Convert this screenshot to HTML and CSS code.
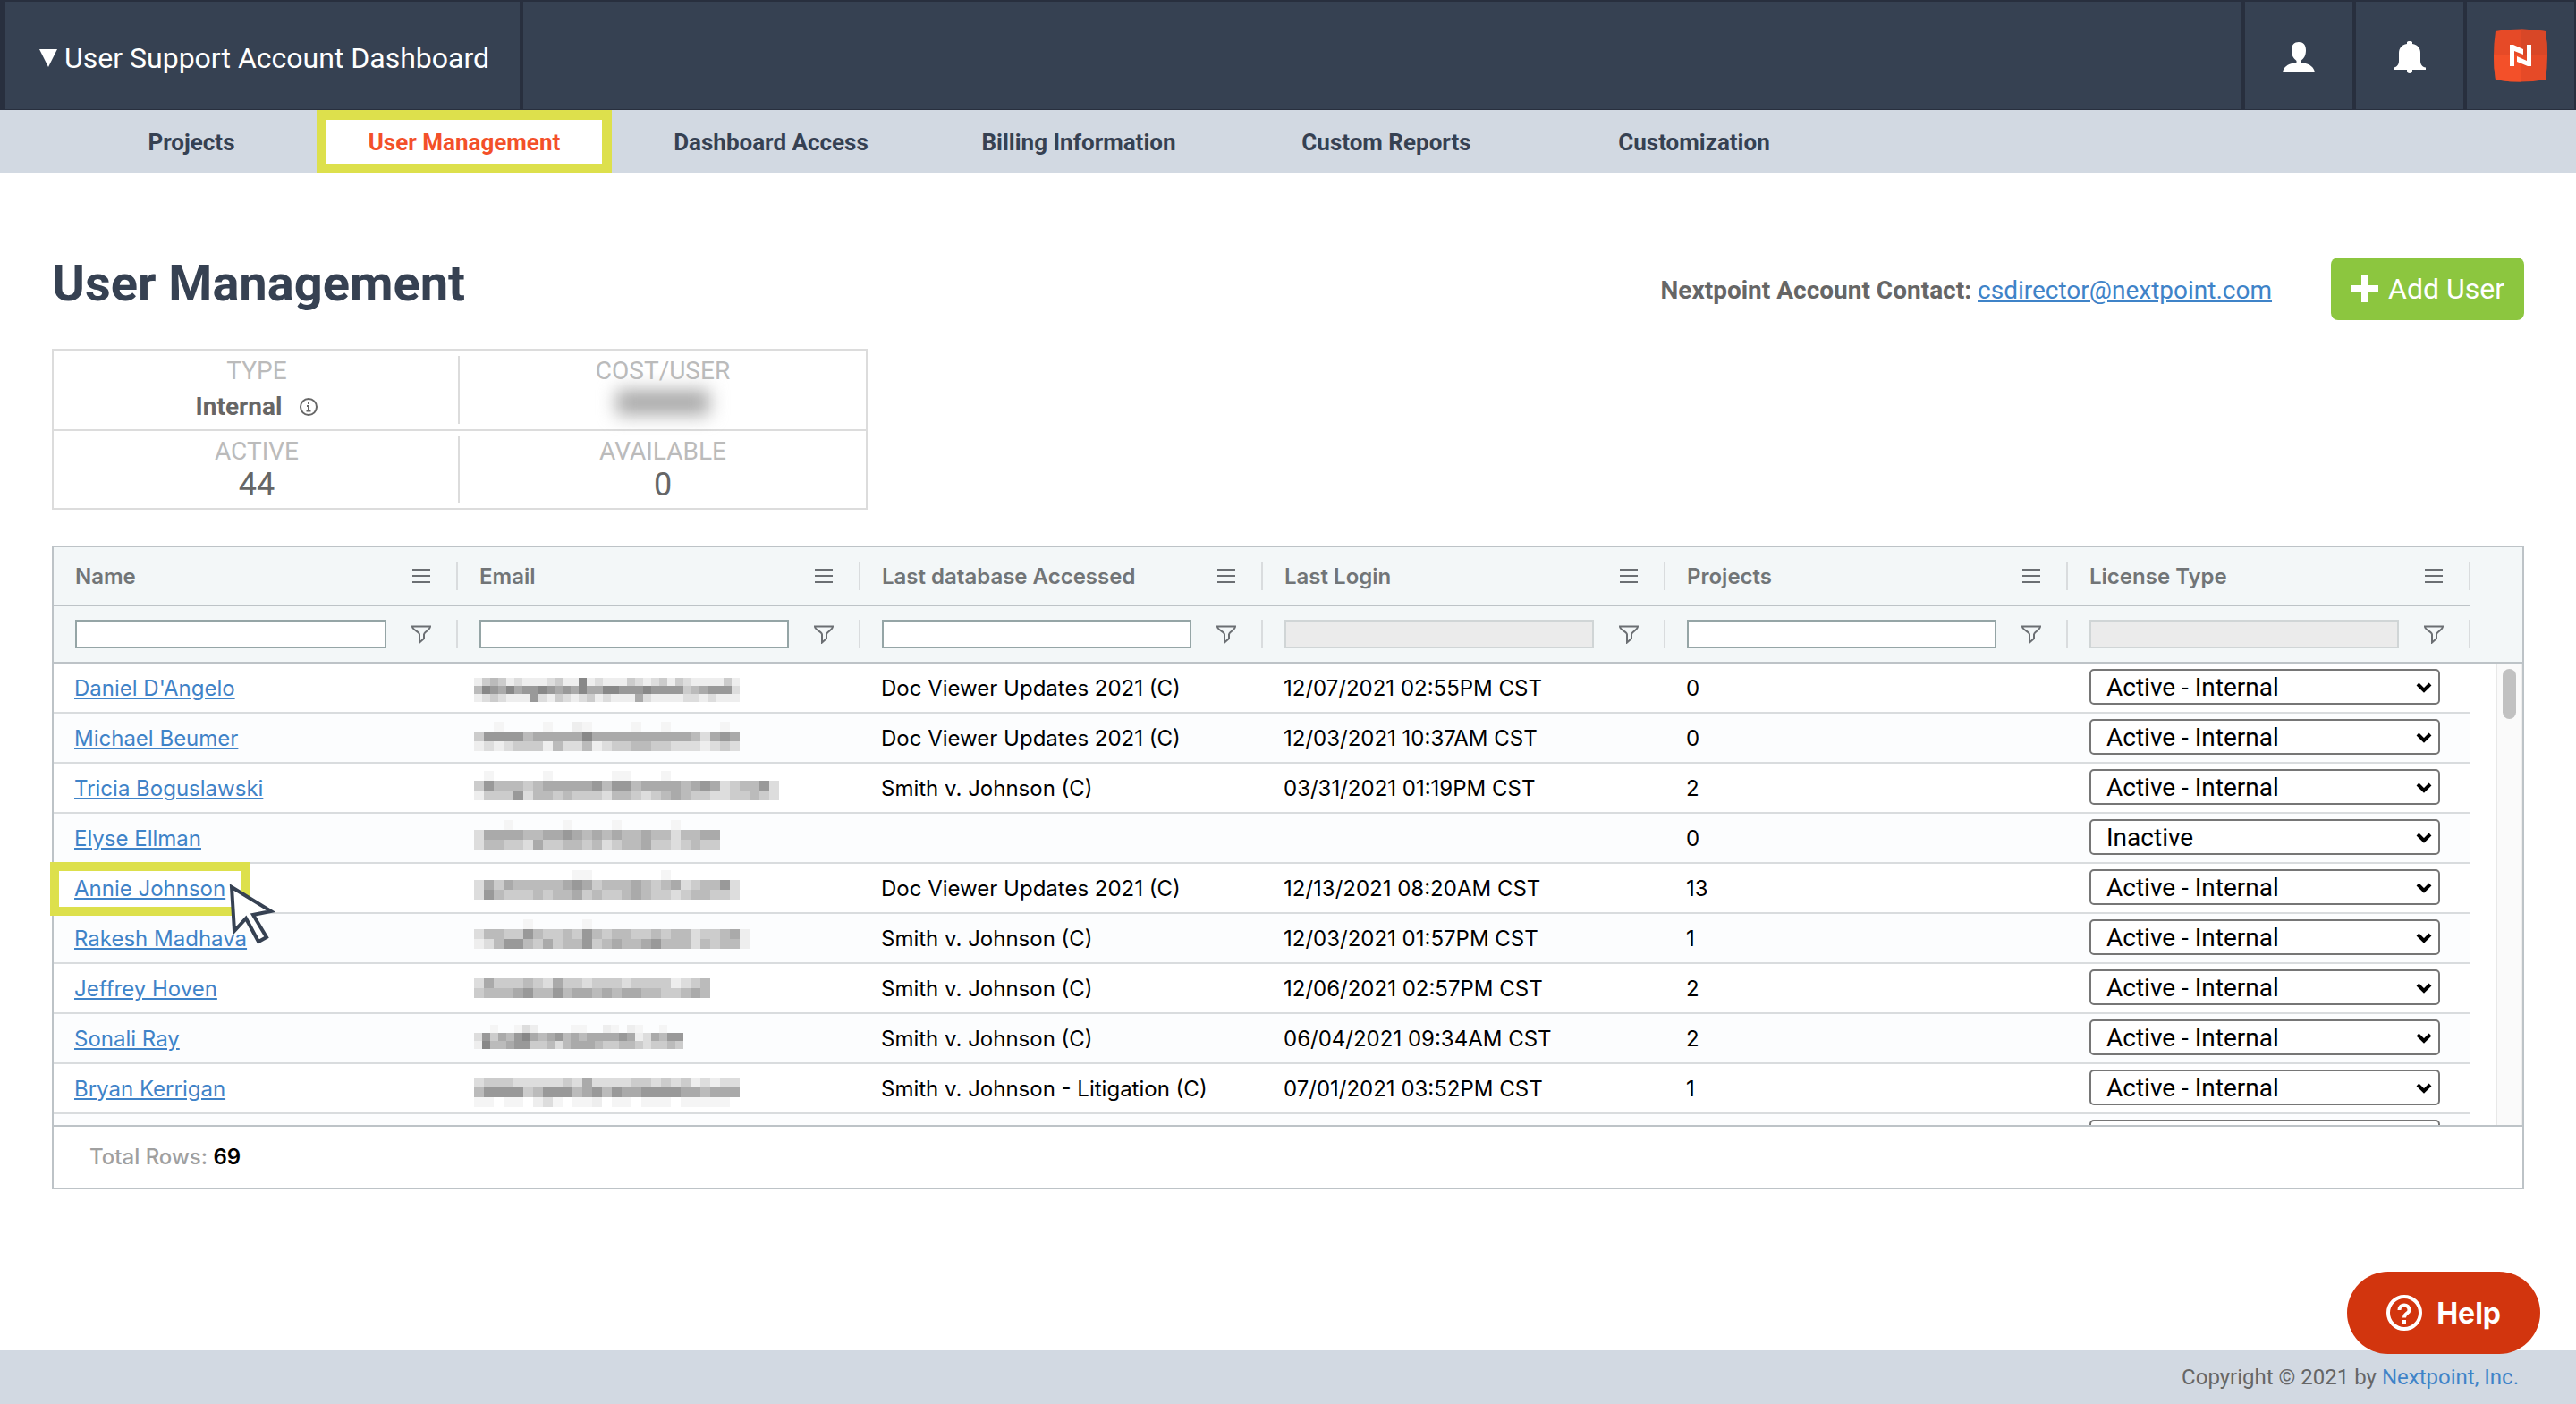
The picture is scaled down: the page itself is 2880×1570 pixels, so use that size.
FILE: index.html
```html
<!DOCTYPE html>
<html lang="en">
<head>
<meta charset="UTF-8" />
<meta name="viewport" content="width=device-width, initial-scale=1" />
<title>User Management</title>
<link rel="stylesheet" href="styles.css">
</head>
<body>

<!-- shared icons -->
<svg class="sprite" width="0" height="0" aria-hidden="true">
  <symbol id="icon-menu" viewBox="0 0 22 22">
    <path d="M1 4h20M1 11h20M1 18h20" fill="none" stroke="#6b6f73" stroke-width="2"/>
  </symbol>
  <symbol id="icon-filter" viewBox="0 0 22 22">
    <path d="M1 2.500h20c0 4-7 6-7 9v4.500l-5 4.500v-9C9 8.500 1 6.500 1 2.500z" fill="none" stroke="#6b6f73" stroke-width="2"/>
  </symbol>
  <symbol id="icon-arrow" viewBox="0 0 18 12">
    <path d="M2 2l7 7 7-7" fill="none" stroke="#000" stroke-width="4"/>
  </symbol>
</svg>

<header class="topbar">
  <a href="#" class="account-switch"><span class="caret"></span>User Support Account Dashboard</a>
  <div class="topbar-icons">
    <a href="#" class="topbar-icon" aria-label="Profile">
      <svg width="36" height="34" viewBox="0 0 36 34" fill="#fff">
        <path d="M18 0c5 0 8 3 8 9 0 6-2 9-5.500 12v2C28 24 34 26 36 33.500H0C2 26 8 24 15.500 23v-2C12 18 10 15 10 9c0-6 3-9 8-9z"/>
      </svg>
    </a>
    <a href="#" class="topbar-icon" aria-label="Notifications">
      <svg width="36" height="36" viewBox="0 0 36 36" fill="#fff">
        <path d="M15 3V1.500C15 .5 16 0 18 0s3 .5 3 1.500V3c6 1 9 5 9 10v9c0 4 2 7 6 7.500V32H21v1c0 2-1 3-3 3s-3-1-3-3v-1H0v-2.500C4 29 6 26 6 22v-9C6 8 9 4 15 3z"/>
      </svg>
    </a>
    <a href="#" class="topbar-icon brand" aria-label="Nextpoint">
      <svg width="60" height="60" viewBox="0 0 60 60">
        <path d="M2 3Q30-2 58 3Q62 30 58 57Q30 62 2 57Q-2 30 2 3z" fill="#e64a27"/>
        <path d="M30 .5Q44 .5 58 3Q60 16 60 30H30z" fill="#d84727"/>
        <path d="M0 30H30V59.500Q16 59.500 2 57Q0 44 0 30z" fill="#f35029"/>
        <path d="M18 18h4l11 5v6l-10-4v17h-5zM42 42h-4l-12-5v-6l11 5V18h5z" fill="#fff"/>
      </svg>
    </a>
  </div>
</header>

<nav class="tabs">
  <a href="#" class="tab">Projects</a>
  <a href="#" class="tab active">User Management</a>
  <a href="#" class="tab">Dashboard Access</a>
  <a href="#" class="tab">Billing Information</a>
  <a href="#" class="tab">Custom Reports</a>
  <a href="#" class="tab">Customization</a>
</nav>

<main class="content">
  <div class="page-head">
    <h1>User Management</h1>
    <p class="contact"><strong>Nextpoint Account Contact:</strong> <a href="#">csdirector@nextpoint.com</a></p>
    <button type="button" class="btn-add">
      <svg width="32" height="32" viewBox="0 0 32 32"><path d="M12 1h8v11h11v8H20v11h-8V20H1v-8h11z" fill="#fff"/></svg>
      Add User
    </button>
  </div>

  <dl class="stats">
    <div class="stat">
      <dt>TYPE</dt>
      <dd class="type">Internal
        <svg width="20" height="20" viewBox="0 0 20 20" fill="none" stroke="#666" stroke-width="2">
          <circle cx="10" cy="10" r="9"/><path d="M8 9h2v5M7.500 14.500h5M10 5v2"/>
        </svg>
      </dd>
    </div>
    <div class="stat">
      <dt>COST/USER</dt>
      <dd class="hidden-cost"><span></span></dd>
    </div>
    <div class="stat">
      <dt>ACTIVE</dt>
      <dd>44</dd>
    </div>
    <div class="stat">
      <dt>AVAILABLE</dt>
      <dd>0</dd>
    </div>
  </dl>

  <div class="grid">
    <div class="grid-view">
      <table>
        <colgroup>
          <col class="col-name"><col><col><col><col><col><col class="col-end">
        </colgroup>
        <thead>
          <tr class="titles" id="titles"></tr>
          <tr class="filters" id="filters"></tr>
        </thead>
        <tbody id="rows"></tbody>
      </table>
      <div class="scrollbar"><div class="thumb"></div></div>
    </div>
    <div class="grid-foot">Total Rows: <strong>69</strong></div>

    <div class="marker"></div>
    <svg class="pointer" width="52" height="70" viewBox="0 0 52 70">
      <path d="M3 4l44 27-20 4 15 25-9 5-14-26L6 53z" fill="#fff" stroke="#364152" stroke-width="4"/>
    </svg>
  </div>
</main>

<footer class="footer">Copyright © 2021 by <a href="#">Nextpoint, Inc.</a></footer>

<button type="button" class="btn-help">
  <svg width="40" height="40" viewBox="0 0 40 40" fill="none" stroke="#fff" stroke-width="4">
    <circle cx="20" cy="20" r="18"/>
    <path d="M14.500 17c0-7.500 11-7.500 11 0 0 4-5.500 3.500-5.500 8.500M20 28v4"/>
  </svg>
  Help
</button>

<script src="script.js"></script>
</body>
</html>
```
FILE: styles.css
```css
* { box-sizing: border-box; }

body {
  margin: 0;
  min-height: 100vh;
  display: flex;
  flex-direction: column;
  background: #fff;
  color: #666;
  font-family: Roboto, "Liberation Sans", sans-serif;
  font-size: 28px;
}
a { color: #3f83c8; }
svg { flex: none; }
button { font-family: inherit; border: none; cursor: pointer; }
.sprite { position: absolute; }

/* top bar */
.topbar {
  display: flex;
  justify-content: space-between;
  height: 123px;
  padding: 2px 2px 1px 6px;
  background: linear-gradient(#364152, #364152) content-box, #282f3e;
}
.account-switch {
  display: flex;
  align-items: center;
  gap: 8px;
  padding: 6px 34px 0 38px;
  border-right: 4px solid #282f3e;
  color: #fff;
  font-size: 32px;
  text-decoration: none;
}
.caret {
  border: 10px solid transparent;
  border-top: 20px solid #fff;
  border-bottom: none;
}
.topbar-icons { display: flex; }
.topbar-icon {
  display: flex;
  align-items: center;
  justify-content: center;
  width: 124px;
  padding-top: 4px;
  border-left: 4px solid #282f3e;
}
.topbar-icon.brand { padding-top: 0; }

/* tabs */
.tabs {
  display: flex;
  height: 71px;
  padding-left: 60px;
  background: #d2d9e2;
}
.tab {
  display: flex;
  align-items: center;
  justify-content: center;
  width: 308px;
  margin-right: 36px;
  color: #364152;
  font-size: 26px;
  font-weight: bold;
  text-decoration: none;
}
.tab:first-child { margin-right: -14px; }
.tab.active {
  width: 330px;
  margin-right: 24px;
  border: 11px solid #dde04c;
  background: #fff;
  color: #f35029;
}

/* page heading */
.content { flex: 1; padding: 94px 58px 0; }
.page-head { display: flex; align-items: center; height: 70px; }
h1 {
  flex: 1;
  margin: 0;
  color: #364152;
  font-size: 56px;
  line-height: 60px;
  padding-bottom: 12px;
}
.contact { margin: 0 66px 0 0; padding-top: 2px; }
.btn-add {
  display: flex;
  align-items: center;
  gap: 10px;
  height: 70px;
  padding: 0 22px;
  border-radius: 8px;
  background: #8cc63f;
  color: #fff;
  font-size: 32px;
}

/* totals */
.stats {
  display: grid;
  grid-template-columns: 1fr 1fr;
  width: 912px;
  margin: 32px 0 40px;
  border: 2px solid #dcdcdc;
}
.stat {
  position: relative;
  height: 86px;
  padding-top: 6px;
  text-align: center;
}
.stat:nth-child(-n+2) { height: 90px; border-bottom: 2px solid #dcdcdc; }
.stat:nth-child(odd)::after {
  content: "";
  position: absolute;
  top: 6px;
  right: 0;
  bottom: 6px;
  width: 2px;
  background: #dcdcdc;
}
.stat dt { color: #bbb; line-height: 34px; }
.stat dd { margin: 0; font-size: 36px; line-height: 40px; }
.stat .type {
  display: flex;
  align-items: center;
  justify-content: center;
  gap: 20px;
  font-size: 28px;
  line-height: 46px;
  font-weight: bold;
}
.hidden-cost { display: flex; justify-content: center; }
.hidden-cost span {
  width: 104px;
  height: 28px;
  margin-top: 4px;
  background: #a8a8a8;
  filter: blur(10px);
}

/* user grid */
.grid {
  position: relative;
  border: 2px solid #bdc3c7;
  color: #000;
  font-family: Inter, "Liberation Sans", sans-serif;
  font-size: 24px;
}
.grid-view { position: relative; height: 646px; overflow: hidden; }
table {
  width: 100%;
  table-layout: fixed;
  border-spacing: 0;
}
.col-name { width: 452px; }
.col-end { width: 58px; }
th, td { padding: 0; text-align: left; }
thead { background: #f3f7f8; }
.titles th { height: 66px; border-bottom: 2px solid #bdc3c7; color: #717577; font-weight: 600; }
.filters td { height: 64px; border-bottom: 2px solid #bdc3c7; }
.titles th:last-child { border-bottom-color: transparent; }
.head-cell {
  display: flex;
  align-items: center;
  justify-content: space-between;
  gap: 28px;
  height: 32px;
  padding: 0 28px 0 24px;
  border-right: 2px solid #d9dcde;
}
.head-cell input {
  flex: 1;
  min-width: 0;
  height: 32px;
  border: 2px solid #95a5a6;
  background: #fff;
}
.head-cell input:disabled { border-color: #d0d5d6; background: #ebebeb; }

tbody td {
  height: 56px;
  padding-left: 23px;
  border-bottom: 2px solid #d9dcde;
  white-space: nowrap;
}
tbody td:nth-child(6) { padding-left: 24px; }
tbody tr:nth-child(even) td { background: #fcfdfe; }
tbody tr td:last-child { border: none; background: #fff; }
tbody .email { padding-left: 18px; }
tbody .email svg { display: block; }

.license { display: grid; align-items: start; width: 392px; height: 42px; }
.license select {
  grid-area: 1 / 1;
  appearance: none;
  height: 40px;
  padding: 0 17px;
  border: 2px solid #767676;
  border-radius: 5px;
  background: #fff;
  color: #000;
  font: 28px Roboto, sans-serif;
}
.license svg {
  grid-area: 1 / 1;
  justify-self: end;
  margin: 15px 9px 0 0;
  pointer-events: none;
}

.scrollbar {
  position: absolute;
  top: 130px;
  right: 0;
  bottom: 0;
  width: 30px;
  padding: 6px 5px 0 6px;
  border-left: 2px solid #e8e8e8;
  border-right: 2px solid #ededed;
  background: #fafafa;
}
.thumb { height: 56px; border-radius: 8px; background: #c1c1c1; }

.grid-foot {
  height: 70px;
  padding-left: 40px;
  border-top: 2px solid #bdc3c7;
  color: #a0a0a0;
  font-weight: 500;
  line-height: 68px;
}
.grid-foot strong { color: #000; font-weight: 600; }

/* click hint on top of the grid */
.marker {
  position: absolute;
  left: -4px;
  top: 352px;
  width: 224px;
  height: 60px;
  border: 10px solid #dde04c;
}
.pointer { position: absolute; left: 196px; top: 376px; }

.footer {
  height: 60px;
  padding-right: 64px;
  background: #d2d9e2;
  font-size: 24px;
  line-height: 60px;
  text-align: right;
}
.footer a { text-decoration: none; }

.btn-help {
  position: fixed;
  right: 40px;
  bottom: 56px;
  display: flex;
  align-items: center;
  gap: 16px;
  height: 92px;
  padding: 0 44px;
  border-radius: 46px;
  background: #d2350e;
  color: #fff;
  font-family: Inter, sans-serif;
  font-size: 32px;
  font-weight: bold;
}
```
FILE: script.js
```js
const columns = [
  { title: 'Name', filter: true },
  { title: 'Email', filter: true },
  { title: 'Last database Accessed', filter: true },
  { title: 'Last Login', filter: false },
  { title: 'Projects', filter: true },
  { title: 'License Type', filter: false },
];

// masked e-mails: block size, top offset, then one hex grey per block ("." = empty)
const users = [
  ['Daniel D\'Angelo', { size: 9, top: 16, lines: ['ecbcedeeedcee8edeeecdedcecdeeeece', 'b89a8a9989a9a8aa8899989999cba999d', 'edcdeee9decdedcedeeeadeeeeddedeee'] }, 'Doc Viewer Updates 2021 (C)', '12/07/2021 02:55PM CST', '0', 'Active - Internal'],
  ['Michael Beumer', { size: 11, top: 9, lines: ['..f....f..ef....f..f.....f.', 'c9999baaaaa8aaaaaaaaaabda9a', 'ededcccebddbedccbbccdddedcd'] }, 'Doc Viewer Updates 2021 (C)', '12/03/2021 10:37AM CST', '0', 'Active - Internal'],
  ['Tricia Boguslawski', { size: 11, top: 8, lines: ['.f.....f......ff...f...........', 'c9bbbcbaaaaa9b99baaaaba9adcbb9d', 'eccc9dbbcbcccdbbcdcbabccddccbcd'] }, 'Smith v. Johnson (C)', '03/31/2021 01:19PM CST', '2', 'Active - Internal'],
  ['Elyse Ellman', { size: 11, top: 7, lines: ['...f.....f....f.....f....', 'daaaabbaa9abababbabbdbbaa', 'dbbccdaccbbcbdcbbaccdcbcc'] }, '', '', '0', 'Inactive'],
  ['Annie Johnson', { size: 11, top: 7, lines: ['..........ff.......f.......', 'dacabbbbba9acbbbabcbadcbb9d', 'd9bcccbcbbacbccbabccdcbbccd'] }, 'Doc Viewer Updates 2021 (C)', '12/13/2021 08:20AM CST', '13', 'Active - Internal'],
  ['Rakesh Madhava', { size: 11, top: 6, lines: ['.....f.....f................', 'dbbcc9bccbc9bcbbccbcbbdccbae', 'edb99bcacbb9cbabba9bbbdbcbbe'] }, 'Smith v. Johnson (C)', '12/03/2021 01:57PM CST', '1', 'Active - Internal'],
  ['Jeffrey Hoven', { size: 11, top: 5, lines: ['........................', 'dacccbcdaccdcccdccccedcb', 'cbbba9bb9baababaabbccbab'] }, 'Smith v. Johnson (C)', '12/06/2021 02:57PM CST', '2', 'Active - Internal'],
  ['Sonali Ray', { size: 9, top: 12, lines: ['..f..fde....ff..ef.ef..f..', 'd9cab98aba9babaaaa9aedab99', 'e8bba99ccbdbaaabccbbcdccbc'] }, 'Smith v. Johnson (C)', '06/04/2021 09:34AM CST', '2', 'Active - Internal'],
  ['Bryan Kerrigan', { size: 11, top: 15, lines: ['dcccdddddcdaddddccdcdcededd', 'b9999cb999ba9b9aa9999aabaaa', 'ff.ff.edf.ffe.ff.fff.fffff.'] }, 'Smith v. Johnson - Litigation (C)', '07/01/2021 03:52PM CST', '1', 'Active - Internal'],
  ['', { size: 11, top: 15, lines: [] }, '', '', '', 'Active - Internal'],
];

function icon(name, w, h) {
  return `<svg width="${w}" height="${h}" aria-hidden="true"><use href="#icon-${name}"/></svg>`;
}

function mosaic({ size, top, lines }) {
  let rects = '';
  lines.forEach((line, y) => {
    [...line].forEach((c, x) => {
      if (c === '.') return;
      const fill = c === 'f' ? '#f5f5f5' : `#${c}${c}${c}`;
      rects += `<rect x="${x * size}" y="${top + y * size}" width="${size}" height="${size}" fill="${fill}"/>`;
    });
  });
  return `<svg width="360" height="54" shape-rendering="crispEdges">${rects}</svg>`;
}

document.getElementById('titles').innerHTML = columns.map(c =>
  `<th scope="col"><div class="head-cell">${c.title}${icon('menu', 22, 22)}</div></th>`
).join('') + '<th></th>';

document.getElementById('filters').innerHTML = columns.map(c =>
  `<td><div class="head-cell"><input type="text" aria-label="${c.title}"${c.filter ? '' : ' disabled'}>${icon('filter', 22, 22)}</div></td>`
).join('') + '<td></td>';

document.getElementById('rows').innerHTML = users.map(([name, mail, db, login, projects, license]) => `
  <tr>
    <td>${name ? `<a href="#">${name}</a>` : ''}</td>
    <td class="email">${mosaic(mail)}</td>
    <td>${db}</td>
    <td>${login}</td>
    <td>${projects}</td>
    <td><div class="license"><select aria-label="License type"><option>${license}</option></select>${icon('arrow', 18, 12)}</div></td>
    <td></td>
  </tr>`
).join('');
```
